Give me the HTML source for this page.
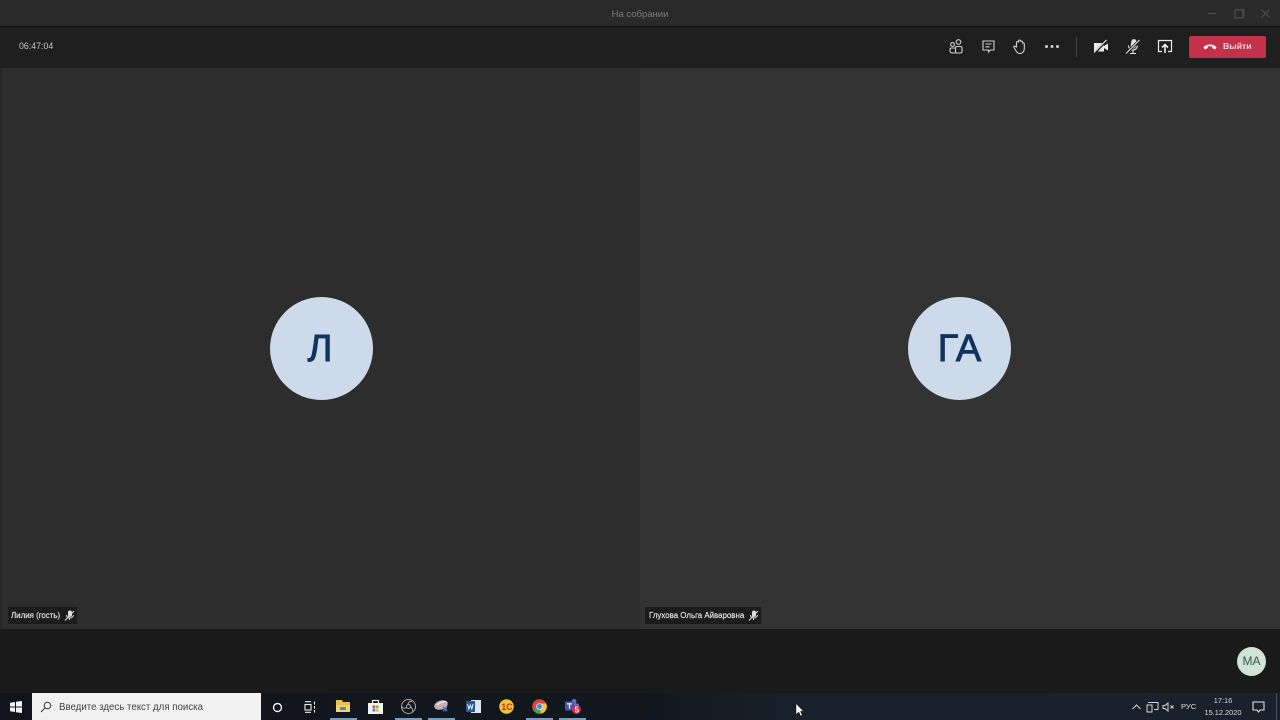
<!DOCTYPE html>
<html lang="ru"><head><meta charset="utf-8"><style>
html,body{margin:0;padding:0;width:1280px;height:720px;overflow:hidden;background:#1b1a1a;font-family:"Liberation Sans","Noto Sans CJK SC",sans-serif}
div,svg,span{position:absolute}
.t{white-space:nowrap}
.ic{fill:none;stroke:#cfcfcf;stroke-width:1.1}
</style></head><body>
<div style="left:0;top:0;width:1280px;height:26px;background:#2b2a2a"></div>
<div style="left:0;top:26px;width:1280px;height:1px;background:#111"></div>
<div class="t" style="left:0;top:7.500px;width:1280px;text-align:center;font-size:9.500px;line-height:13px;color:#7d7d7d">На собрании</div>
<svg style="left:1200px;top:5px" width="80" height="18" fill="none" stroke="#4f4f4f" stroke-width="1.100"><path d="M8 8.500h8"/><rect x="35" y="5" width="8" height="8"/><path d="M37 4.500h7v7" stroke-width=".8"/><path d="M61.500 4.500l8 8M69.500 4.500l-8 8"/></svg>

<div style="left:0;top:27px;width:1280px;height:41px;background:#1f1f1f"></div>
<div class="t" style="left:19px;top:40px;font-size:8.800px;line-height:13px;color:#c8c8c8">06:47:04</div>

<svg class="ic" style="left:948px;top:38px" width="16" height="17"><circle cx="10.500" cy="4" r="2.300"/><circle cx="4.500" cy="6.500" r="1.900"/><rect x="7.500" y="8.500" width="6.500" height="6.500" rx="1.500"/><path d="M7.500 10H3.500Q2 10 2 11.500v1.500q0 2 3 2h2.500"/></svg>
<svg class="ic" style="left:981px;top:39px" width="15" height="15"><path d="M2 2h11v9H9.500L7.500 13V11H2z"/><path d="M4.500 5h6M4.500 7.800h4"/></svg>
<svg class="ic" style="left:1012px;top:38px" width="16" height="17"><path d="M4.500 9V4.500a1 1 0 0 1 2 0V3a1 1 0 0 1 2 0v1a1 1 0 0 1 2 0v1.500a1 1 0 0 1 1.800 0V10.500c0 3-2 5-4.500 5-2 0-3-1-4-3L2 9.500c-.7-1.200.8-2 1.500-1z"/></svg>
<svg style="left:1044px;top:44px" width="16" height="5" fill="#cfcfcf"><circle cx="2.500" cy="2.500" r="1.500"/><circle cx="8" cy="2.500" r="1.500"/><circle cx="13.500" cy="2.500" r="1.500"/></svg>
<div style="left:1076px;top:37px;width:1px;height:20px;background:#444"></div>
<svg style="left:1093px;top:38px" width="16" height="17"><path d="M1 5h10v8.500H1zM11 8l4-2.500v7L11 10z" fill="#eee"/><path d="M1.500 15L14 2" stroke="#1f1f1f" stroke-width="2.600"/><path d="M1 14.500L13.500 2" stroke="#eee" stroke-width="1.100"/></svg>
<svg style="left:1125px;top:38px" width="16" height="17" fill="none" stroke="#e2e2e2" stroke-width="1.100"><rect x="6.500" y="1.500" width="4" height="8.500" rx="2" fill="#e2e2e2" transform="rotate(10 8 6)"/><path d="M3.500 7.500c0 3 2 4.500 4.500 4.500s4-1.500 4.500-4.500M8 12v3M5 15.500h6"/><path d="M1 15.500L14.500 2" stroke="#1f1f1f" stroke-width="2.600"/><path d="M1 15.500L14.500 2"/></svg>
<svg style="left:1157px;top:38px" width="16" height="17" fill="none" stroke="#ececec" stroke-width="1.200"><path d="M5 13.500H1.500V2.500h13v11H11"/><path d="M8 15V7M5 9.500L8 6.500l3 3" stroke-width="1.600"/></svg>

<div style="left:1189px;top:36px;width:77px;height:22px;background:#c4314b;border-radius:2px"></div>
<svg style="left:1203px;top:42px" width="14" height="9"><path d="M.5 5.500C3 1.500 11 1.500 13.500 5.500L12 7.500 9.300 6V4.500C8 4.200 6 4.200 4.700 4.500V6L2 7.500z" fill="#f8f8f8"/></svg>
<div class="t" style="left:1223px;top:40px;font-size:8.700px;line-height:13px;font-weight:bold;color:#edd8dc">Выйти</div>

<div style="left:0;top:68px;width:640px;height:561px;background:#2d2d2d"></div>
<div style="left:640px;top:68px;width:640px;height:561px;background:#333"></div>
<div style="left:0;top:68px;width:2px;height:561px;background:#252525"></div>

<div style="left:270px;top:297px;width:103px;height:103px;border-radius:50%;background:#ccdaea"></div>
<div class="t" style="left:270px;top:298px;width:100px;text-align:center;font-size:38px;line-height:103px;color:#0f3460;-webkit-text-stroke:.9px #0f3460">Л</div>
<div style="left:908px;top:297px;width:103px;height:103px;border-radius:50%;background:#ccdaea"></div>
<div class="t" style="left:908px;top:298px;width:103px;text-align:center;font-size:38px;line-height:103px;color:#0f3460;-webkit-text-stroke:.9px #0f3460">ГА</div>

<div style="left:8px;top:607px;width:69px;height:17px;background:#1c1c1c"></div>
<div class="t" style="left:11px;top:609px;font-size:7.900px;line-height:13px;color:#e8e8e8;-webkit-text-stroke:.15px #e8e8e8">Лилия (гость)</div>
<svg style="left:64px;top:610px" width="11" height="11" fill="none" stroke="#ddd" stroke-width="1"><rect x="4.500" y="1" width="3" height="5.500" rx="1.500" fill="#ddd"/><path d="M2.500 5c0 2 1.500 3 3.500 3s3-1 3.500-3M5.500 8v2"/><path d="M1 10.500L10 1"/></svg>
<div style="left:645px;top:607px;width:116px;height:17px;background:#1c1c1c"></div>
<div class="t" style="left:649px;top:609px;font-size:7.900px;line-height:13px;color:#e8e8e8;-webkit-text-stroke:.15px #e8e8e8">Глухова Ольга Айваровна</div>
<svg style="left:748px;top:610px" width="11" height="11" fill="none" stroke="#ddd" stroke-width="1"><rect x="4.500" y="1" width="3" height="5.500" rx="1.500" fill="#ddd"/><path d="M2.500 5c0 2 1.500 3 3.500 3s3-1 3.500-3M5.500 8v2"/><path d="M1 10.500L10 1"/></svg>

<div style="left:1237px;top:647px;width:29px;height:29px;border-radius:50%;background:#cfe3d7"></div>
<div class="t" style="left:1237px;top:647px;width:29px;text-align:center;font-size:12px;line-height:29px;color:#2f5a4a">МА</div>

<div style="left:0;top:693px;width:1280px;height:27px;background:linear-gradient(90deg,#11151b 0,#12171e 50%,#17202b 62%,#18212c 100%)"></div>
<svg style="left:10px;top:701px" width="12" height="12" fill="#f4f4f4"><path d="M0 1.700L5 1v4.500H0zM6 .8L12 0v5.500H6zM0 6.500h5V11L0 10.300zM6 6.500h6V12L6 11.200z"/></svg>
<div style="left:32px;top:693px;width:229px;height:27px;background:#f1f1f1"></div>
<svg style="left:40px;top:701px" width="12" height="12" fill="none" stroke="#333" stroke-width="1"><circle cx="7.500" cy="4.500" r="3.300"/><path d="M5 7L1 11"/></svg>
<div class="t" style="left:59px;top:701px;font-size:9.700px;line-height:14px;color:#444">Введите здесь текст для поиска</div>
<svg style="left:272px;top:702px" width="11" height="11" fill="none" stroke="#f0f0f0" stroke-width="1.400"><circle cx="5.500" cy="5.500" r="4"/></svg>
<svg style="left:304px;top:701px" width="12" height="12" fill="none" stroke="#e8e8e8" stroke-width="1.100"><path d="M1 .7h6M1 11.300h6M10.500 .5v3M10.500 5v2.500M10.500 9v2.500"/><rect x="1" y="3.500" width="6" height="5.500"/></svg>

<svg style="left:336px;top:699px" width="14" height="14"><path d="M0 1h6l1 2h7v10H0z" fill="#e9c04e"/><rect x="0" y="6" width="14" height="7" fill="#f3d472"/><rect x="4" y="8" width="6" height="3" fill="#4d8db5"/></svg>
<div style="left:330px;top:718px;width:27px;height:2px;background:#7a9cbc"></div>
<svg style="left:368px;top:699px" width="15" height="15"><path d="M0 4h15v11H0z" fill="#f4f4f4"/><path d="M4.500 4V1.500h6V4" fill="none" stroke="#eee" stroke-width="1.200"/><rect x="4.500" y="6.500" width="2.700" height="2.700" fill="#e2552b"/><rect x="7.800" y="6.500" width="2.700" height="2.700" fill="#76b82a"/><rect x="4.500" y="9.800" width="2.700" height="2.700" fill="#2a95d8"/><rect x="7.800" y="9.800" width="2.700" height="2.700" fill="#f4b719"/></svg>
<svg style="left:401px;top:699px" width="15" height="15" fill="none" stroke="#a8a8a8" stroke-width="1"><circle cx="7.500" cy="7.500" r="7"/><circle cx="7.500" cy="7.500" r="2"/><path d="M7 5.500C7 3 9 2 11 2.500M9.500 8c2 1 2.500 3 1.500 4.500M5.500 8.500C4 9.500 2.500 9.500 1 8"/></svg>
<div style="left:395px;top:718px;width:27px;height:2px;background:#7a9cbc"></div>
<svg style="left:434px;top:699px" width="16" height="15"><ellipse cx="7" cy="6" rx="7" ry="4.500" fill="#c9adb4" transform="rotate(-18 7 6)"/><path d="M3 6Q8 2 13 3" stroke="#fff" fill="none"/><path d="M9 8l4 4M13 8l-4 4" stroke="#3d7fd0" stroke-width="1.600"/></svg>
<div style="left:428px;top:718px;width:27px;height:2px;background:#7a9cbc"></div>
<svg style="left:466px;top:699px" width="15" height="15"><rect x="5" y="1" width="10" height="13" fill="#dfe7f3"/><rect x="0" y="2" width="9" height="11" fill="#2a5699"/><path d="M1.500 5l1.300 5 1.500-4 1.500 4 1.300-5" fill="none" stroke="#fff" stroke-width=".9"/></svg>
<svg style="left:499px;top:699px" width="15" height="15"><circle cx="7.500" cy="7.500" r="7.300" fill="#f3c23c"/><text x="2.200" y="10.800" font-family="Liberation Sans" font-size="9" font-weight="bold" fill="#c7341d">1С</text></svg>
<svg style="left:532px;top:699px" width="15" height="15"><circle cx="7.500" cy="7.500" r="7.300" fill="#d9483b"/><path d="M7.500 7.500L1.200 11.200A7.300 7.300 0 0 0 9 14.700z" fill="#3aa757"/><path d="M7.500 4.500H14.200A7.300 7.300 0 0 1 9 14.700L7.500 7.500z" fill="#f5c33b"/><circle cx="7.500" cy="7.500" r="3.300" fill="#eee"/><circle cx="7.500" cy="7.500" r="2.500" fill="#4285f4"/></svg>
<div style="left:526px;top:718px;width:27px;height:2px;background:#7a9cbc"></div>
<svg style="left:564px;top:698px" width="18" height="17"><circle cx="10" cy="3.500" r="2.500" fill="#6a6fc4"/><rect x="7" y="5.500" width="8" height="7" rx="2" fill="#6a6fc4"/><rect x="1" y="3.500" width="9" height="9" rx="1" fill="#4b53a8"/><path d="M3 5.800h5M5.500 5.800v5" stroke="#fff" stroke-width="1.200"/><circle cx="12.500" cy="11.500" r="4.500" fill="#c92f45"/><text x="10.500" y="14.500" font-family="Liberation Sans" font-size="8" font-weight="bold" fill="#fff">5</text></svg>
<div style="left:559px;top:718px;width:27px;height:2px;background:#7a9cbc"></div>

<svg style="left:795px;top:703px" width="9" height="14"><path d="M1 .5v11l2.800-2.500 1.700 4 1.700-.8-1.700-3.800H8.500z" fill="#fff" stroke="#111" stroke-width=".5"/></svg>

<svg style="left:1131px;top:702px" width="11" height="10" fill="none" stroke="#d6d6d6" stroke-width="1"><path d="M1.500 7L5.500 3l4 4"/></svg>
<svg style="left:1146px;top:701px" width="13" height="12" fill="none" stroke="#d6d6d6" stroke-width="1"><path d="M2 1.500h10v7H8"/><rect x="1" y="4" width="5" height="7" fill="#18212c"/></svg>
<svg style="left:1162px;top:702px" width="12" height="10" fill="none" stroke="#d6d6d6" stroke-width="1"><path d="M1 3.500h2L6 1v8L3 6.500H1zM8.500 3.500l3 3M11.500 3.500l-3 3"/></svg>
<div class="t" style="left:1181px;top:700px;font-size:7.600px;line-height:13px;color:#dcdcdc">РУС</div>
<div class="t" style="left:1200px;top:694.500px;width:46px;text-align:center;font-size:7.400px;line-height:12px;color:#dcdcdc">17:16</div>
<div class="t" style="left:1200px;top:706.500px;width:46px;text-align:center;font-size:7.400px;line-height:12px;color:#dcdcdc">15.12.2020</div>
<svg style="left:1252px;top:701px" width="13" height="12" fill="none" stroke="#e2e2e2" stroke-width="1.100"><path d="M1 1h11v8H8L6.500 11 5 9H1z"/></svg>
<div style="left:1276px;top:693px;width:1px;height:27px;background:#4a525c"></div>
</body></html>
